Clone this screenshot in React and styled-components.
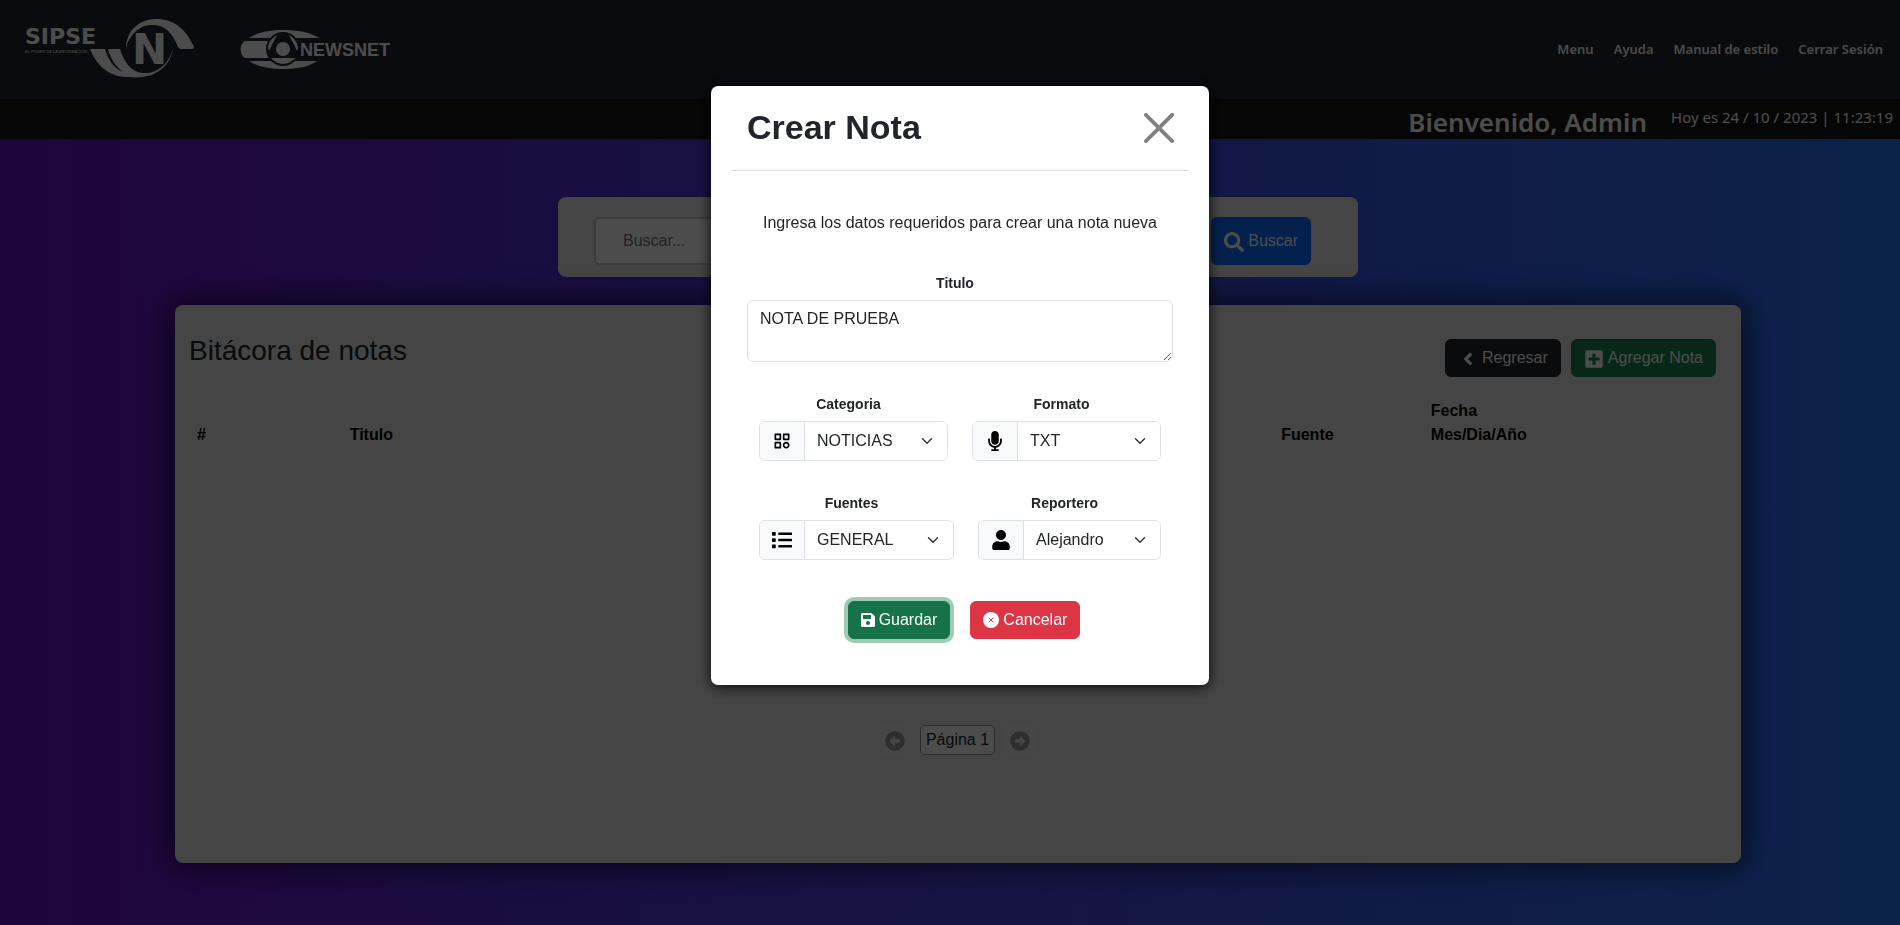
import React, { useState } from "react";
import styled, { createGlobalStyle, css } from "styled-components";
import {
  FaSearch,
  FaAngleLeft,
  FaPlusSquare,
  FaArrowAltCircleLeft,
  FaArrowAltCircleRight,
  FaMicrophone,
  FaUser,
  FaSave,
  FaList,
} from "react-icons/fa";
import { BiCategory } from "react-icons/bi";

const GlobalStyle = createGlobalStyle`
  *, *::before, *::after { box-sizing: border-box; }
  body {
    margin: 0;
    font-family: "Liberation Sans", Arial, sans-serif;
    font-size: 16px;
    line-height: 24px;
    color: #212529;
  }
  button, input, select, textarea { font: inherit; color: inherit; }
  h1, h2, p { margin: 0; }
`;

const Page = styled.div`
  min-height: 100vh;
  display: flex;
  flex-direction: column;
  background: linear-gradient(to right, #6a11cb, #2575fc);
`;

const Header = styled.header`
  display: flex;
  align-items: center;
  justify-content: space-between;
  height: 99px;
  padding: 0 17px 2px 24px;
  background: #1f2531;
`;

const Brands = styled.div`
  display: flex;
  align-items: center;
  gap: 44px;
`;

const Logo = styled.svg`
  display: block;
  fill: #fff;
`;

const Nav = styled.nav`
  display: flex;
  gap: 20px;
  font-family: "Noto Sans", "Open Sans", sans-serif;
`;

const NavLink = styled.a`
  color: #f8f8f8;
  font-size: 13px;
  font-weight: 600;
  text-decoration: none;
`;

const WelcomeBar = styled.div`
  display: flex;
  justify-content: flex-end;
  gap: 24px;
  height: 40px;
  padding: 6px 7px 0 0;
  background: #151515;
  color: #fff;
  font-family: "Noto Sans", "Open Sans", sans-serif;
`;

const Greeting = styled.h2`
  font-size: 26px;
  font-weight: 600;
  line-height: 34px;
`;

const Clock = styled.span`
  font-size: 15px;
`;

const Main = styled.main`
  display: flex;
  flex-direction: column;
  gap: 28px;
  padding: 58px 159px 62px 175px;
`;

const SearchBox = styled.form`
  align-self: center;
  display: flex;
  gap: 12px;
  width: 100%;
  max-width: 800px;
  padding: 20px 47px 12px 36px;
  border-radius: 8px;
  background: #e6e6e6;
`;

const SearchInput = styled.input`
  flex: 1;
  min-width: 0;
  height: 48px;
  padding: 0 27px;
  border: 2px solid #c8c8c8;
  border-radius: 5px;
  background: #fff;
  &::placeholder { color: #757575; opacity: 1; }
`;

const tones = {
  primary: "#0d6efd",
  dark: "#212529",
  success: "#198754",
  successActive: "#157347",
  danger: "#dc3545",
};

const Button = styled.button`
  display: inline-flex;
  align-items: center;
  gap: 4px;
  padding: ${(p) => (p.$tall ? "11px" : "6px")} 12px;
  border: 1px solid ${(p) => tones[p.$tone]};
  border-radius: 6px;
  background: ${(p) => tones[p.$tone]};
  color: #fff;
  white-space: nowrap;
  ${(p) =>
    p.$ring &&
    css`
      box-shadow: 0 0 0 4px rgba(60, 153, 110, 0.5);
    `}
`;

const IconSlot = styled.span`
  display: inline-flex;
  padding-top: 2px;
`;

const SaveIcon = styled(FaSave)`
  width: 14px;
  height: 16px;
`;

const LogCard = styled.section`
  height: 558px;
  padding: 34px 25px 0 14px;
  border-radius: 8px;
  background: #e6e6e6;
  box-shadow: 0 0 30px 5px rgba(0, 0, 0, 0.6);
  display: flex;
  flex-direction: column;
`;

const CardHead = styled.div`
  display: flex;
  justify-content: space-between;
`;

const CardTitle = styled.h2`
  font-size: 28px;
  font-weight: 400;
  line-height: 24px;
`;

const Actions = styled.div`
  display: flex;
  gap: 10px;
`;

const NotesTable = styled.table`
  width: 100%;
  margin-top: 14px;
  border-collapse: collapse;
  table-layout: fixed;
  color: #000;
`;

const HeadCell = styled.th`
  width: ${(p) => p.$width};
  padding: 8px;
  text-align: left;
  vertical-align: bottom;
`;

const Pager = styled.nav`
  display: flex;
  align-items: center;
  justify-content: center;
  gap: 10px;
  margin-top: auto;
  padding: 0 0 108px 10px;
`;

const PageArrow = styled.button`
  display: flex;
  padding: 6px 5px 4px;
  border: 0;
  background: #eaeaea;
  color: #9c9c9c;
`;

const PageLabel = styled.span`
  padding: 2px 5px;
  border: 1px solid #8f8f8f;
  border-radius: 5px;
  background: #fff;
`;

const Backdrop = styled.div`
  position: fixed;
  inset: 0;
  display: flex;
  align-items: flex-start;
  justify-content: center;
  padding: 86px 0 0 20px;
  overflow: auto;
  background: rgba(0, 0, 0, 0.7);
`;

const Dialog = styled.div`
  width: 100%;
  max-width: 498px;
  padding: 20px;
  border-radius: 7px;
  background: #fff;
  box-shadow: 0 2px 14px rgba(0, 0, 0, 0.9);
`;

const DialogHead = styled.div`
  display: flex;
  align-items: center;
  justify-content: space-between;
  padding: 0 15px 22px 16px;
  border-bottom: 1px solid #dee2e6;
`;

const DialogTitle = styled.h1`
  font-size: 34px;
  line-height: 42px;
`;

const CloseButton = styled.button`
  display: flex;
  padding: 2px 0 0;
  border: 0;
  background: none;
  color: #808080;
`;

const DialogForm = styled.form`
  display: flex;
  flex-direction: column;
  gap: 32px;
  padding: 0 16px 26px;
`;

const Intro = styled.p`
  padding: 40px 0 6px;
  text-align: center;
`;

const Field = styled.div`
  display: flex;
  flex-direction: column;
  gap: 6px;
`;

const Label = styled.label`
  padding-right: 10px;
  font-size: 14px;
  font-weight: 700;
  line-height: 21px;
  text-align: center;
`;

const TextArea = styled.textarea`
  display: block;
  height: 62px;
  padding: 6px 12px;
  border: 1px solid #dee2e6;
  border-radius: 6px;
  resize: vertical;
`;

const FieldRow = styled.div`
  display: grid;
  grid-template-columns: ${(p) => p.$columns};
  gap: 24px;
  padding: 0 12px;
`;

const InputGroup = styled.div`
  display: flex;
  height: 40px;
  border: 1px solid #dee2e6;
  border-radius: 6px;
  overflow: hidden;
`;

const Addon = styled.span`
  display: flex;
  align-items: center;
  justify-content: center;
  width: 45px;
  border-right: 1px solid #dee2e6;
  background: #f8f9fa;
  color: #000;
`;

const SelectWrap = styled.div`
  flex: 1;
  min-width: 0;
  display: grid;
  align-items: center;
  & > * { grid-area: 1 / 1; }
`;

const Select = styled.select`
  width: 100%;
  height: 38px;
  padding: 0 36px 0 12px;
  border: 0;
  background: #fff;
  appearance: none;
`;

const Chevron = styled.svg`
  justify-self: end;
  margin-right: 12px;
  pointer-events: none;
  fill: none;
  stroke: #343a40;
  stroke-width: 2;
  stroke-linecap: round;
  stroke-linejoin: round;
`;

const DialogActions = styled.div`
  display: flex;
  justify-content: center;
  gap: 20px;
  padding: 9px 0 0 8px;
`;

const SipseLogo = () => (
  <Logo width="172" height="64" viewBox="24 16 172 64" role="img" aria-label="SIPSE N">
    <text x="25" y="43" fontFamily="DejaVu Sans, sans-serif" fontWeight="700" fontSize="22">SIPSE</text>
    <text x="25" y="52" fontFamily="Liberation Sans, sans-serif" fontStyle="italic" fontSize="4">EL PODER DE LA INFORMACIÓN</text>
    <path d="M126 48C126 30 139 18 156 18C174 18 186 28 194 46Q194 48 192 48L181 48Q179 48 178 46C172 31 165 24 152 24C139 24 129 34 126 48Z" />
    <path d="M90 48C98 68 112 76 128 76C152 79 170 68 173 47C169 64 156 73 143 72C131 71 124 61 120 48L108 48C111 59 116 66 123 71C113 67 108 58 105 48Z" />
    <text x="132" y="63" fontFamily="DejaVu Sans, sans-serif" fontWeight="700" fontSize="42">N</text>
  </Logo>
);

const NewsnetLogo = () => (
  <Logo width="153" height="40" viewBox="240 28 153 40" role="img" aria-label="NEWSNET">
    <path d="M249 37C258 31 270 29 283 29C297 29 310 31 319 37Z" />
    <path d="M249 60C258 66 270 68 283 68C297 68 309 66 317 60Z" />
    <path d="M245 40H270V57H245C239 54 239 43 245 40Z" />
    <circle cx="283" cy="48" r="17" fill="#1f2531" />
    <circle cx="283" cy="48" r="15" />
    <path d="M278 33Q283 31 288 33L299 51L296 57H270L267 51Z" fill="#1f2531" />
    <path d="M275 37L269 50Q268 42 275 37ZM291 37L297 50Q299 42 291 37Z" />
    <circle cx="283" cy="48" r="7" />
    <text x="300" y="55" fontFamily="Liberation Sans, sans-serif" fontWeight="700" fontSize="18">NEWSNET</text>
  </Logo>
);

const CancelIcon = () => (
  <svg width="16" height="16" viewBox="0 0 16 16" aria-hidden="true">
    <circle cx="8" cy="8" r="8" fill="#fff" />
    <path d="M6 6L10 10M10 6L6 10" stroke="#dc3545" strokeWidth="1" strokeLinecap="round" />
  </svg>
);

const SelectField = ({ id, label, icon, options }) => (
  <Field>
    <Label htmlFor={id}>{label}</Label>
    <InputGroup>
      <Addon>{icon}</Addon>
      <SelectWrap>
        <Select id={id}>
          {options.map((o) => (
            <option key={o}>{o}</option>
          ))}
        </Select>
        <Chevron width="16" height="12" viewBox="0 0 16 16" aria-hidden="true">
          <path d="m2 5 6 6 6-6" />
        </Chevron>
      </SelectWrap>
    </InputGroup>
  </Field>
);

export default function App() {
  const [open, setOpen] = useState(true);
  const [title, setTitle] = useState("NOTA DE PRUEBA");
  const close = () => setOpen(false);
  const submit = (e) => e.preventDefault();

  return (
    <>
      <GlobalStyle />
      <Page>
        <Header>
          <Brands>
            <SipseLogo />
            <NewsnetLogo />
          </Brands>
          <Nav>
            <NavLink href="#menu">Menu</NavLink>
            <NavLink href="#ayuda">Ayuda</NavLink>
            <NavLink href="#manual">Manual de estilo</NavLink>
            <NavLink href="#salir">Cerrar Sesión</NavLink>
          </Nav>
        </Header>
        <WelcomeBar>
          <Greeting>Bienvenido, Admin</Greeting>
          <Clock>Hoy es 24 / 10 / 2023 | 11:23:19</Clock>
        </WelcomeBar>
        <Main>
          <SearchBox onSubmit={submit}>
            <SearchInput type="search" aria-label="Buscar" placeholder="Buscar..." />
            <Button type="submit" $tone="primary" $tall>
              <IconSlot><FaSearch size={20} /></IconSlot>
              Buscar
            </Button>
          </SearchBox>
          <LogCard>
            <CardHead>
              <CardTitle>Bitácora de notas</CardTitle>
              <Actions>
                <Button type="button" $tone="dark">
                  <IconSlot><FaAngleLeft size={20} /></IconSlot>
                  Regresar
                </Button>
                <Button type="button" $tone="success" onClick={() => setOpen(true)}>
                  <IconSlot><FaPlusSquare size={20} /></IconSlot>
                  Agregar Nota
                </Button>
              </Actions>
            </CardHead>
            <NotesTable>
              <thead>
                <tr>
                  <HeadCell $width="10%">#</HeadCell>
                  <HeadCell $width="61%">Titulo</HeadCell>
                  <HeadCell $width="9.8%">Fuente</HeadCell>
                  <HeadCell>Fecha<br />Mes/Dia/Año</HeadCell>
                </tr>
              </thead>
            </NotesTable>
            <Pager aria-label="Paginación">
              <PageArrow type="button" disabled aria-label="Anterior"><FaArrowAltCircleLeft size={20} /></PageArrow>
              <PageLabel>Página 1</PageLabel>
              <PageArrow type="button" disabled aria-label="Siguiente"><FaArrowAltCircleRight size={20} /></PageArrow>
            </Pager>
          </LogCard>
        </Main>
      </Page>
      {open && (
        <Backdrop>
          <Dialog role="dialog" aria-modal="true" aria-labelledby="dialog-title">
            <DialogHead>
              <DialogTitle id="dialog-title">Crear Nota</DialogTitle>
              <CloseButton type="button" aria-label="Cerrar" onClick={close}>
                <svg width="30" height="30" viewBox="0 0 16 16" fill="currentColor" aria-hidden="true">
                  <path d="M.293.293a1 1 0 0 1 1.414 0L8 6.586 14.293.293a1 1 0 1 1 1.414 1.414L9.414 8l6.293 6.293a1 1 0 0 1-1.414 1.414L8 9.414l-6.293 6.293a1 1 0 0 1-1.414-1.414L6.586 8 .293 1.707a1 1 0 0 1 0-1.414z" />
                </svg>
              </CloseButton>
            </DialogHead>
            <DialogForm onSubmit={submit}>
              <Intro>Ingresa los datos requeridos para crear una nota nueva</Intro>
              <Field>
                <Label htmlFor="titulo">Titulo</Label>
                <TextArea id="titulo" value={title} onChange={(e) => setTitle(e.target.value)} />
              </Field>
              <FieldRow $columns="1fr 1fr">
                <SelectField id="categoria" label="Categoria" icon={<BiCategory size={20} />} options={["NOTICIAS"]} />
                <SelectField id="formato" label="Formato" icon={<FaMicrophone size={20} />} options={["TXT"]} />
              </FieldRow>
              <FieldRow $columns="195fr 183fr">
                <SelectField id="fuentes" label="Fuentes" icon={<FaList size={20} />} options={["GENERAL"]} />
                <SelectField id="reportero" label="Reportero" icon={<FaUser size={20} />} options={["Alejandro"]} />
              </FieldRow>
              <DialogActions>
                <Button type="submit" $tone="successActive" $ring>
                  <SaveIcon />
                  Guardar
                </Button>
                <Button type="button" $tone="danger" onClick={close}>
                  <CancelIcon />
                  Cancelar
                </Button>
              </DialogActions>
            </DialogForm>
          </Dialog>
        </Backdrop>
      )}
    </>
  );
}
